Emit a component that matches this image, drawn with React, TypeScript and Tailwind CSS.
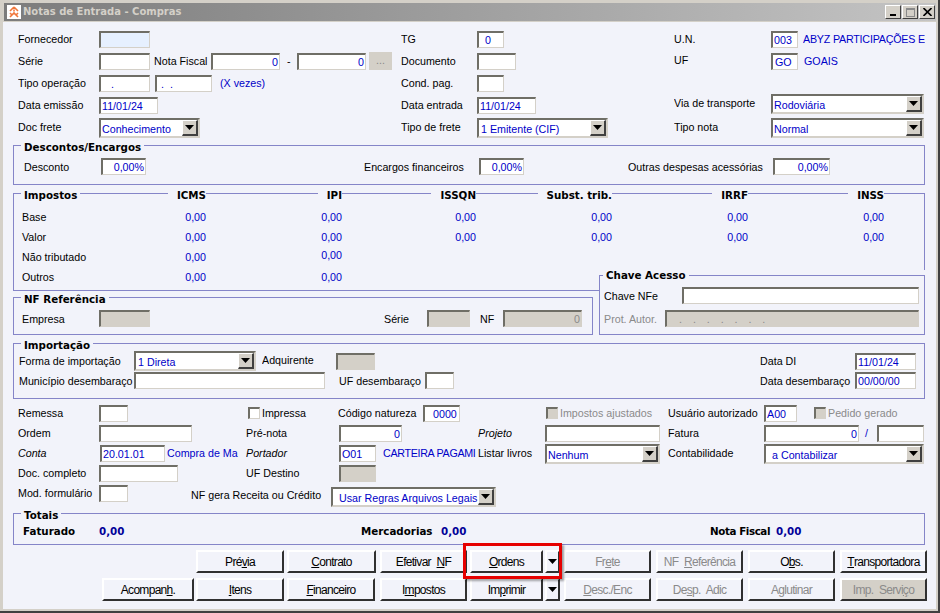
type P = { className?: string; children?: React.ReactNode };
import React from "react";

function Label({ className = "", children }: P) {
  return <div className={"shrink-0 whitespace-nowrap overflow-hidden " + className}>{children}</div>;
}

function Blue({ className = "", children }: P) {
  return <div className={"shrink-0 whitespace-nowrap overflow-hidden text-[#0000c8] " + className}>{children}</div>;
}

function Gray({ className = "", children }: P) {
  return <div className={"shrink-0 whitespace-nowrap overflow-hidden text-[#8a8a8a] " + className}>{children}</div>;
}

// campo afundado estilo windows
function Input({ className = "", children, off, right }: P & { off?: boolean; right?: boolean }) {
  return (
    <div
      className={
        "shrink-0 h-[17px] flex items-center px-[1px] whitespace-nowrap overflow-hidden border-t-2 border-l-2 border-r border-b border-t-[#6f6e66] border-l-[#6f6e66] border-r-[#d4d0c8] border-b-[#d4d0c8] " +
        (off ? "bg-[#d4d0c8] text-[#8a8a8a] " : "bg-white text-[#0000c8] ") +
        (right ? "justify-end " : "") +
        className
      }
    >
      {children}
    </div>
  );
}

function Select({ className = "", children }: P) {
  return (
    <div className={"shrink-0 h-[20px] flex items-center bg-white text-[#0000c8] border-2 border-[#6f6e66] border-r-[#d4d0c8] border-b-[#d4d0c8] " + className}>
      <div className="flex-1 pl-[1px] pt-[2px] whitespace-nowrap overflow-hidden">{children}</div>
      <div className="w-[16px] h-[16px] flex items-center justify-center bg-[#d4d0c8] border-t border-l border-white border-r-2 border-b-2 border-r-[#404040] border-b-[#404040]">
        <Arrow />
      </div>
    </div>
  );
}

function Arrow() {
  return (
    <svg width="9" height="5" viewBox="0 0 9 5">
      <path d="M0 0h9L4.5 5z" fill="#000" />
    </svg>
  );
}

function Check({ off }: { off?: boolean }) {
  return (
    <div className={"shrink-0 w-[12px] h-[12px] border-t-2 border-l-2 border-[#6f6e66] border-r border-b border-r-[#d4d0c8] border-b-[#d4d0c8] " + (off ? "bg-[#d4d0c8]" : "bg-white")} />
  );
}

function Row({ className = "", children }: P) {
  return <div className={"flex items-center " + className}>{children}</div>;
}

function Box({ title, className = "", legend = "-top-[6px] left-[7px]", children }: P & { title: string; legend?: string }) {
  return (
    <div className={"relative w-[912px] border border-[#8585c8] " + className}>
      <div className={"absolute px-[3px] h-[14px] leading-[14px] bg-[#f2f3fa] whitespace-nowrap font-['DejaVu_Sans'] font-bold text-[10.3px] " + legend}>{title}</div>
      {children}
    </div>
  );
}

function Btn({ className = "", children, off, face }: P & { off?: boolean; face?: boolean }) {
  return (
    <div
      className={
        "shrink-0 h-[23px] flex items-center justify-center whitespace-pre text-[12px] tracking-[-0.7px] [word-spacing:3px] font-['Liberation_Sans'] border-t-2 border-l-2 border-white border-r-2 border-b-2 border-r-[#303030] border-b-[#303030] " +
        (off ? "text-[#8a8a8a] " : "text-black ") +
        (face ? "bg-[#d4d0c8] " : "bg-[#f2f3fa] ") +
        className
      }
    >
      {children}
    </div>
  );
}

function WinBtn({ children }: P) {
  return (
    <div className="w-[16px] h-[14px] flex items-center justify-center bg-[#d4d0c8] border-t border-l border-white border-r border-b border-r-[#404040] border-b-[#404040]">
      {children}
    </div>
  );
}

function TitleBar() {
  return (
    <div className="h-[18px] ml-[1px] flex items-center bg-gradient-to-r from-[#7c7c7c] to-[#c4c4c4] pl-[3px] pr-[1px]">
      <svg width="14" height="14" viewBox="0 0 14 14" className="shrink-0">
        <rect width="14" height="14" fill="#fff" />
        <path d="M7 2 3 6M7 2l4 4M3 12l4-4 4 4M3 8l2 2M11 8l-2 2M7 4.5v2" stroke="#f0763a" strokeWidth="1.6" fill="none" />
      </svg>
      <div className="ml-[2px] text-[#d4d0c8] font-['DejaVu_Sans'] font-bold text-[10px] whitespace-nowrap">Notas de Entrada - Compras</div>
      <div className="ml-auto flex gap-[1px]">
        <WinBtn><div className="w-[6px] h-[2px] bg-black mt-[6px] mr-[1px]" /></WinBtn>
        <WinBtn><div className="w-[9px] h-[9px] border border-[#8a8a8a] border-t-2" /></WinBtn>
        <WinBtn>
          <svg width="9" height="8" viewBox="0 0 9 8"><path d="M0.5 0 8.5 8M8.5 0 0.5 8" stroke="#000" strokeWidth="1.6" /></svg>
        </WinBtn>
      </div>
    </div>
  );
}

function TopForm() {
  return (
    <div className="flex pl-[5px] pt-[6px]">
      <div className="w-[383px] shrink-0">
        <Row className="h-[22px]"><Label className="w-[81px]">Fornecedor</Label><Input className="w-[51px] !bg-[#e6f0ff]" /></Row>
        <Row className="h-[22px]">
          <Label className="w-[81px]">Série</Label><Input className="w-[51px]" />
          <Label className="w-[57px] ml-[4px]">Nota Fiscal</Label><Input right className="w-[69px]">0</Input>
          <Label className="w-[17px] pl-[7px]">-</Label><Input right className="w-[69px]">0</Input>
          <div className="ml-[3px] w-[23px] h-[18px] bg-[#d4d0c8] text-[#8a8a8a] text-center leading-[16px]">...</div>
        </Row>
        <Row className="h-[22px]">
          <Label className="w-[81px]">Tipo operação</Label><Input className="w-[51px] pl-[10px]">.</Input>
          <Input className="w-[57px] ml-[5px] pl-[4px]">.&nbsp;&nbsp;.</Input>
          <Blue className="ml-[8px]">(X vezes)</Blue>
        </Row>
        <Row className="h-[22px]"><Label className="w-[81px]">Data emissão</Label><Input className="w-[59px]">11/01/24</Input></Row>
        <Row className="h-[22px] items-end"><Label className="w-[81px] mb-[4px]">Doc frete</Label><Select className="w-[101px]">Conhecimento</Select></Row>
      </div>
      <div className="w-[273px] shrink-0">
        <Row className="h-[22px]"><Label className="w-[76px]">TG</Label><Input className="w-[27px] pl-[6px]">0</Input></Row>
        <Row className="h-[22px]"><Label className="w-[76px]">Documento</Label><Input className="w-[39px]" /></Row>
        <Row className="h-[22px]"><Label className="w-[76px]">Cond. pag.</Label><Input className="w-[27px]" /></Row>
        <Row className="h-[22px]"><Label className="w-[76px]">Data entrada</Label><Input className="w-[59px]">11/01/24</Input></Row>
        <Row className="h-[22px] items-end"><Label className="w-[76px] mb-[4px]">Tipo de frete</Label><Select className="w-[131px]"><span className="pl-[1px]">1 Emitente (CIF)</span></Select></Row>
      </div>
      <div>
        <Row className="h-[22px]"><Label className="w-[97px]">U.N.</Label><Input className="w-[27px]">003</Input><Blue className="ml-[5px] tracking-[-0.2px]">ABYZ PARTICIPAÇÕES E</Blue></Row>
        <Row className="h-[22px]"><Label className="w-[97px] mb-[2px]">UF</Label><Input className="w-[27px] pl-[2px]">GO</Input><Blue className="ml-[6px]">GOAIS</Blue></Row>
        <Row className="h-[20px] mt-[22px]"><Label className="w-[97px] mb-[2px]">Via de transporte</Label><Select className="w-[153px]">Rodoviária</Select></Row>
        <Row className="h-[20px] mt-[4px]"><Label className="w-[97px] mb-[2px]">Tipo nota</Label><Select className="w-[153px]">Normal</Select></Row>
      </div>
    </div>
  );
}

function Descontos() {
  return (
    <Box title="Descontos/Encargos" className="mt-[7px] h-[40px]">
      <Row className="pl-[10px] pt-[12px]">
        <Label className="w-[77px]">Desconto</Label><Input right className="w-[45px]">0,00%</Input>
        <Label className="w-[115px] ml-[218px]">Encargos financeiros</Label><Input right className="w-[45px]">0,00%</Input>
        <Label className="w-[145px] ml-[104px]">Outras despesas acessórias</Label><Input right className="w-[57px]">0,00%</Input>
      </Row>
    </Box>
  );
}

const impostosCols = "grid grid-cols-[192px_136px_134px_136px_136px_136px]";
const headerCell = "justify-self-end pl-[9px] bg-[#f2f3fa]";
const impostosRows = [
  { name: "Base", vals: ["0,00", "0,00", "0,00", "0,00", "0,00", "0,00"] },
  { name: "Valor", vals: ["0,00", "0,00", "0,00", "0,00", "0,00", "0,00"] },
  { name: "Não tributado", vals: ["0,00", "0,00"] },
  { name: "Outros", vals: ["0,00", "0,00"] },
];

function Impostos() {
  return (
    <div className="relative mt-[8px] w-[912px] h-[98px] border border-[#8585c8]">
      <div className={impostosCols + " -mt-[6px] h-[14px] leading-[14px] font-['DejaVu_Sans'] font-bold text-[10.3px]"}>
        <div className="relative">
          <span className="absolute left-[7px] px-[3px] bg-[#f2f3fa]">Impostos</span>
          <span className={"absolute right-0 " + headerCell}>ICMS</span>
        </div>
        <div className={headerCell}>IPI</div>
        <div className={headerCell}>ISSQN</div>
        <div className={headerCell}>Subst. trib.</div>
        <div className={headerCell}>IRRF</div>
        <div className={headerCell}>INSS</div>
      </div>
      <div className="pt-[5px]">
        {impostosRows.map((r) => (
          <div key={r.name} className={impostosCols + " h-[20px] items-center"}>
            <div className="relative h-[20px] flex items-center justify-end text-[#0000c8]">
              <span className="absolute left-[8px] text-black">{r.name}</span>
              {r.vals[0]}
            </div>
            {r.vals.slice(1).map((v, i) => (
              <div key={i} className={"text-right text-[#0000c8] " + (r.name === "Não tributado" ? "mb-[4px]" : "")}>{v}</div>
            ))}
          </div>
        ))}
      </div>
    </div>
  );
}

function Referencia() {
  return (
    <div className="flex -mt-[21px] h-[65px] w-[912px]">
      <Box title="NF Referência" className="!w-[580px] h-[38px] mt-[27px]">
        <Row className="pl-[8px] pt-[12px]">
          <Label className="w-[77px]">Empresa</Label><Input off className="w-[51px]" />
          <Label className="w-[43px] ml-[234px]">Série</Label><Input off className="w-[43px]" />
          <Label className="w-[23px] ml-[10px]">NF</Label><Input off right className="w-[79px]">0</Input>
        </Row>
      </Box>
      <div className="relative ml-[6px] w-[326px] pt-[5px] bg-[#f2f3fa]">
        <Box title="Chave Acesso" legend="-top-[8px] left-[3px]" className="!w-[326px] h-[60px]">
          <Row className="pl-[4px] pt-[11px]"><Label className="w-[78px]">Chave NFe</Label><Input className="w-[237px]" /></Row>
          <Row className="pl-[4px] mt-[6px]"><Gray className="w-[61px]">Prot. Autor.</Gray><Input off className="w-[254px] pl-[12px] tracking-[0.5px]">.&nbsp;&nbsp;&nbsp;.&nbsp;&nbsp;&nbsp;.&nbsp;&nbsp;&nbsp;.&nbsp;&nbsp;&nbsp;.&nbsp;&nbsp;&nbsp;.&nbsp;&nbsp;&nbsp;.</Input></Row>
        </Box>
      </div>
    </div>
  );
}

function Importacao() {
  return (
    <Box title="Importação" className="mt-[8px] h-[56px]">
      <Row className="h-[20px] mt-[7px] pl-[5px]">
        <Label className="w-[115px]">Forma de importação</Label><Select className="w-[122px]"><span className="pl-[1px]">1 Direta</span></Select>
        <Label className="w-[74px] ml-[6px] mb-[2px]">Adquirente</Label><Input off className="w-[39px]" />
        <Label className="w-[95px] ml-auto">Data DI</Label><Input className="w-[61px] mr-[8px]">11/01/24</Input>
      </Row>
      <Row className="h-[17px] mt-[1px] pl-[5px]">
        <Label className="w-[115px]">Município desembaraço</Label><Input className="w-[191px]" />
        <Label className="w-[86px] ml-[14px]">UF desembaraço</Label><Input className="w-[29px]" />
        <Label className="w-[95px] ml-auto">Data desembaraço</Label><Input className="w-[61px] mr-[8px]">00/00/00</Input>
      </Row>
    </Box>
  );
}

function Geral() {
  return (
    <div className="pl-[5px] mt-[4px]">
      <Row className="h-[20px]">
        <Label className="w-[81px]">Remessa</Label><Input className="w-[29px]" />
        <div className="ml-[120px]"><Check /></div><Label className="w-[76px] ml-[2px]">Impressa</Label>
        <Label className="w-[85px]">Código natureza</Label><Input className="w-[37px] pl-[8px]">0000</Input>
        <div className="ml-[86px]"><Check off /></div><Gray className="w-[108px] ml-[2px]">Impostos ajustados</Gray>
        <Label className="w-[96px]">Usuário autorizado</Label><Input className="w-[33px]">A00</Input>
        <div className="ml-[17px]"><Check off /></div><Gray className="ml-[2px]">Pedido gerado</Gray>
      </Row>
      <Row className="h-[20px]">
        <Label className="w-[81px]">Ordem</Label><Input className="w-[93px]" />
        <Label className="w-[93px] ml-[54px]">Pré-nota</Label><Input right className="w-[63px]">0</Input>
        <Label className="w-[67px] ml-[76px] italic">Projeto</Label><Input className="w-[115px]" />
        <Label className="w-[96px] ml-[8px]">Fatura</Label><Input right className="w-[95px]">0</Input>
        <Label className="w-[18px] pl-[6px] text-[#0000c8]">/</Label><Input className="w-[47px]" />
      </Row>
      <Row className="h-[20px]">
        <Label className="w-[82px] italic">Conta</Label><Input className="w-[65px]">20.01.01</Input>
        <Blue className="w-[79px] ml-[2px]">Compra de Ma</Blue>
        <Label className="w-[93px] italic">Portador</Label><Input className="w-[37px]">O01</Input>
        <Blue className="w-[95px] ml-[7px] tracking-[-0.3px]">CARTEIRA PAGAMI</Blue>
        <Label className="w-[67px]">Listar livros</Label><Select className="w-[115px] mt-[2px]">Nenhum</Select>
        <Label className="w-[96px] ml-[8px]">Contabilidade</Label><Select className="w-[160px] mt-[2px]"><span className="pl-[5px]">a Contabilizar</span></Select>
      </Row>
      <Row className="h-[20px]">
        <Label className="w-[81px]">Doc. completo</Label><Input className="w-[79px]" />
        <Label className="w-[93px] ml-[68px]">UF Destino</Label><Input off className="w-[37px]" />
      </Row>
      <Row className="h-[20px]">
        <Label className="w-[81px]">Mod. formulário</Label><Input className="w-[29px]" />
        <Label className="w-[140px] ml-[63px] mt-[4px]">NF gera Receita ou Crédito</Label>
        <Select className="w-[165px] mt-[8px]"><span className="pl-[5px]">Usar Regras Arquivos Legais</span></Select>
      </Row>
    </div>
  );
}

function Totais() {
  const bold = "font-['DejaVu_Sans'] font-bold text-[10.3px] whitespace-nowrap ";
  return (
    <Box title="Totais" className="mt-[10px] h-[32px]">
      <Row className={"h-[18px] mt-[8px] pl-[9px] " + bold}>
        <div className="w-[76px]">Faturado</div><div className="w-[262px] text-[#000098]">0,00</div>
        <div className="w-[80px]">Mercadorias</div><div className="w-[269px] text-[#000098]">0,00</div>
        <div className="w-[66px] tracking-[-0.4px]">Nota Fiscal</div><div className="text-[#000098]">0,00</div>
      </Row>
    </Box>
  );
}

function Buttons() {
  return (
    <div className="relative mt-[5px]">
      <div className="flex ml-[183px]">
        <Btn className="w-[88px]">Pré<u>v</u>ia</Btn>
        <Btn className="w-[89px] ml-[3px]"><u>C</u>ontrato</Btn>
        <Btn className="w-[87px] ml-[4px]">Efetivar <u>N</u>F</Btn>
        <Btn className="w-[73px] ml-[3px]"><u>O</u>rdens</Btn>
        <Btn className="w-[15px] ml-[2px]"><Arrow /></Btn>
        <Btn off className="w-[87px] ml-[4px]">Fr<u>e</u>te</Btn>
        <Btn off className="w-[87px] ml-[5px]">NF <u>R</u>eferência</Btn>
        <Btn className="w-[87px] ml-[5px]">O<u>b</u>s.</Btn>
        <Btn className="w-[87px] ml-[5px]"><u>T</u>ransportadora</Btn>
      </div>
      <div className="flex ml-[89px] mt-[5px]">
        <Btn className="w-[92px]">Acompan<u>h</u>.</Btn>
        <Btn className="w-[88px] ml-[2px]"><u>I</u>tens</Btn>
        <Btn className="w-[88px] ml-[3px]"><u>F</u>inanceiro</Btn>
        <Btn className="w-[87px] ml-[5px]">I<u>m</u>postos</Btn>
        <Btn className="w-[73px] ml-[3px]">Im<u>p</u>rimir</Btn>
        <Btn className="w-[15px] ml-[2px]"><Arrow /></Btn>
        <Btn off className="w-[87px] ml-[4px]"><u>D</u>esc./Enc</Btn>
        <Btn off className="w-[87px] ml-[5px]">De<u>s</u>p. Adic</Btn>
        <Btn off className="w-[87px] ml-[5px]">A<u>g</u>lutinar</Btn>
        <Btn off face className="w-[87px] ml-[5px]">Imp. Servi<u>ç</u>o</Btn>
      </div>
      {/* destaque vermelho da tela */}
      <div className="absolute left-[450px] -top-[7px] w-[99px] h-[36px] border-[3px] border-[#e60000] shadow-[2px_2px_2px_rgba(0,0,0,0.35)]" />
    </div>
  );
}

export default function App() {
  return (
    <div className="w-[940px] h-[613px] overflow-hidden bg-[#d4d0c8] border-r-2 border-b-2 border-r-[#404040] border-b-[#404040] pl-[3px] pt-[3px] pr-[2px] pb-[2px] font-['Liberation_Sans'] text-[10.7px] leading-[14px] text-black">
      <TitleBar />
      <div className="h-[587px] bg-[#f2f3fa] mt-[1px] pl-[10px]">
        <TopForm />
        <Descontos />
        <Impostos />
        <Referencia />
        <Importacao />
        <Geral />
        <Totais />
        <Buttons />
      </div>
    </div>
  );
}
